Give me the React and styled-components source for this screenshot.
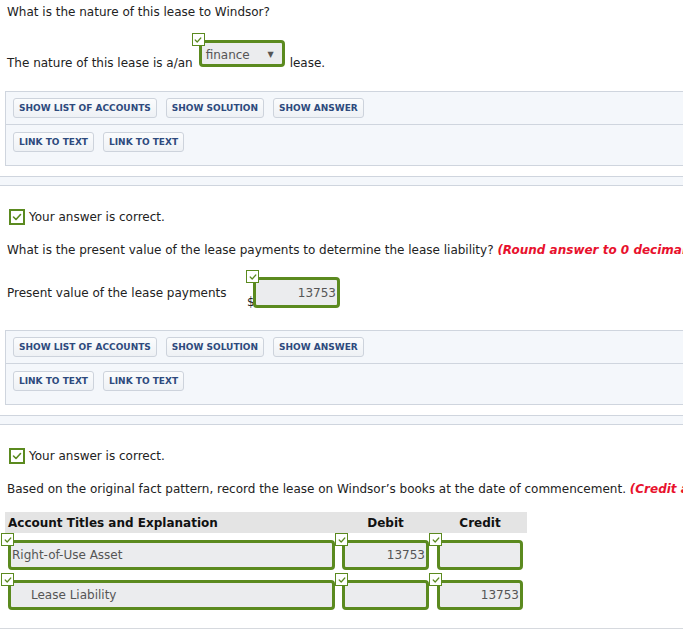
import React from 'react';
import styled, { createGlobalStyle } from 'styled-components';

const GREEN = '#5b8a1f';
const LINE = '#cfd5de';
const PANEL_BG = '#f4f7fb';

const Global = createGlobalStyle`
  html, body { margin: 0; padding: 0; background: #fff; overflow: hidden; }
  body {
    font-family: "DejaVu Sans", Verdana, sans-serif;
    font-size: 12px;
    color: #222;
  }
`;

const Page = styled.div`
  width: 683px;
  overflow: hidden;
  padding-top: 4px;
`;

const Line = styled.div`
  padding-left: 7px;
  line-height: 16px;
  white-space: nowrap;
  margin-top: ${p => p.$mt || 0}px;
`;

const Hint = styled.span`
  color: #e8112d;
  font-weight: bold;
  font-style: italic;
`;

const FillRow = styled.div`
  display: flex;
  align-items: flex-end;
  padding-left: 7px;
  margin-top: 20px;
  white-space: nowrap;
`;

const FillText = styled.span`
  line-height: 16px;
`;

const Marked = styled.span`
  position: relative;
  display: inline-flex;
  margin: ${p => p.$m || '0'};
`;

const MarkBox = styled.span`
  position: absolute;
  top: -7px;
  left: -7px;
  width: 13px;
  height: 13px;
  box-sizing: border-box;
  border: 1px solid ${GREEN};
  background: #fff;
  display: flex;
  align-items: center;
  justify-content: center;
  z-index: 2;
`;

const Check = ({ size = 9, stroke = 1.6 }) => (
  <svg width={size} height={size} viewBox="0 0 10 10">
    <polyline points="1.5,5 4,7.5 8.5,2.5" fill="none" stroke={GREEN} strokeWidth={stroke} strokeLinecap="round" strokeLinejoin="round" />
  </svg>
);

const Mark = () => (
  <MarkBox><Check size={8} stroke={1.5} /></MarkBox>
);

const Select = styled.div`
  width: 86px;
  height: 27px;
  box-sizing: border-box;
  border: 3px solid ${GREEN};
  border-radius: 4px;
  background: #ebecee;
  display: flex;
  align-items: center;
  justify-content: space-between;
  padding: 2px 8px 0 4px;
  color: #555;
  font-size: 12px;
`;

const Arrow = styled.span`
  font-size: 8px;
  color: #555;
`;

const Panel = styled.div`
  margin-left: 5px;
  width: 900px;
  border: 1px solid ${LINE};
  background: ${PANEL_BG};
  margin-top: ${p => p.$mt || 0}px;
`;

const PanelRow = styled.div`
  display: flex;
  gap: 9px;
  padding: ${p => (p.$last ? '7px 7px 13px' : '6px 7px')};
  & + & { border-top: 1px solid ${LINE}; }
`;

const Btn = styled.button`
  font-family: "DejaVu Sans", Verdana, sans-serif;
  font-size: 9px;
  font-weight: bold;
  color: #2e4a7d;
  background: linear-gradient(#fbfcfd, #eef1f5);
  border: 1px solid #cdd3dc;
  border-radius: 3px;
  height: 20px;
  padding: 0 5px;
  line-height: 18px;
  white-space: nowrap;
  cursor: pointer;
`;

const Separator = styled.div`
  margin-top: 10px;
  height: 8px;
  border-top: 1px solid ${LINE};
  border-bottom: 1px solid ${LINE};
  background: ${PANEL_BG};
`;

const CorrectRow = styled.div`
  display: flex;
  align-items: center;
  gap: 4px;
  padding-left: 9px;
  margin-top: 23px;
  line-height: 16px;
`;

const CorrectBox = styled.span`
  width: 16px;
  height: 16px;
  box-sizing: border-box;
  border: 2px solid ${GREEN};
  display: flex;
  align-items: center;
  justify-content: center;
  background: #fff;
`;

const PVRow = styled.div`
  display: flex;
  align-items: center;
  padding-left: 7px;
  margin-top: 19px;
`;

const PVLabel = styled.span`
  width: 240px;
  white-space: nowrap;
`;

const PVGroup = styled.div`
  display: flex;
  align-items: flex-end;
`;

const Dollar = styled.span`
  line-height: 12px;
  width: 6px;
  color: #222;
`;

const Field = styled.div`
  width: ${p => p.$w}px;
  height: ${p => p.$h || 30}px;
  box-sizing: border-box;
  border: 3px solid ${GREEN};
  border-radius: 4px;
  background: #ebecee;
  color: #555;
  font-size: 12px;
  display: flex;
  align-items: center;
  justify-content: ${p => (p.$right ? 'flex-end' : 'flex-start')};
  padding: ${p => (p.$right ? '0 1px 0 0' : `0 0 0 ${p.$indent ? 20 : 1}px`)};
  white-space: nowrap;
`;

const Table = styled.div`
  margin-top: 15px;
  margin-left: 1px;
`;

const HeadRow = styled.div`
  margin-left: 4px;
  width: 522px;
  height: 21px;
  background: #e4e4e4;
  display: flex;
  align-items: center;
  font-weight: bold;
  color: #111;
`;

const HeadCell = styled.div`
  width: ${p => p.$w}px;
  padding-left: ${p => p.$pl || 0}px;
  box-sizing: border-box;
  text-align: ${p => p.$align || 'center'};
  margin-right: ${p => p.$mr || 0}px;
`;

const EntryRow = styled.div`
  display: flex;
  margin-top: ${p => p.$mt || 0}px;
`;

const Cell = styled.div`
  position: relative;
  padding: 7px 0 0 ${p => p.$pl || 7}px;
`;

const CellMark = styled(MarkBox)`
  top: 0;
  left: 0;
`;

const BottomLine = styled.div`
  margin-top: 18px;
  border-top: 1px solid #d6d9de;
`;

const Buttons = () => (
  <>
    <PanelRow>
      <Btn>SHOW LIST OF ACCOUNTS</Btn>
      <Btn>SHOW SOLUTION</Btn>
      <Btn>SHOW ANSWER</Btn>
    </PanelRow>
    <PanelRow $last>
      <Btn>LINK TO TEXT</Btn>
      <Btn>LINK TO TEXT</Btn>
    </PanelRow>
  </>
);

const Correct = () => (
  <CorrectRow>
    <CorrectBox><Check size={10} stroke={1.6} /></CorrectBox>
    <span>Your answer is correct.</span>
  </CorrectRow>
);

const Entry = ({ mt, account, indent, debit, credit }) => (
  <EntryRow $mt={mt}>
    <Cell>
      <CellMark><Check size={8} stroke={1.5} /></CellMark>
      <Field $w={327} $indent={indent}>{account}</Field>
    </Cell>
    <Cell>
      <CellMark><Check size={8} stroke={1.5} /></CellMark>
      <Field $w={87} $right>{debit}</Field>
    </Cell>
    <Cell $pl={8}>
      <CellMark><Check size={8} stroke={1.5} /></CellMark>
      <Field $w={86} $right>{credit}</Field>
    </Cell>
  </EntryRow>
);

export default function App() {
  return (
    <Page>
      <Global />
      <Line>What is the nature of this lease to Windsor?</Line>
      <FillRow>
        <FillText>The nature of this lease is a/an</FillText>
        <Marked $m="0 5px 4px 6px">
          <Mark />
          <Select>
            <span>finance</span>
            <Arrow>▼</Arrow>
          </Select>
        </Marked>
        <FillText>lease.</FillText>
      </FillRow>
      <Panel $mt={20}>
        <Buttons />
      </Panel>
      <Separator />

      <Correct />
      <Line $mt={17}>
        What is the present value of the lease payments to determine the lease liability?{' '}
        <Hint>(Round answer to 0 decimal places, e.g. 5,275.)</Hint>
      </Line>
      <PVRow>
        <PVLabel>Present value of the lease payments</PVLabel>
        <PVGroup>
          <Dollar>$</Dollar>
          <Marked>
            <Mark />
            <Field $w={87} $h={31} $right>13753</Field>
          </Marked>
        </PVGroup>
      </PVRow>
      <Panel $mt={22}>
        <Buttons />
      </Panel>
      <Separator />

      <Correct />
      <Line $mt={17}>
        Based on the original fact pattern, record the lease on Windsor’s books at the date of commencement.{' '}
        <Hint>(Credit account titles are automatically indented when amount is entered. Do not indent manually.)</Hint>
      </Line>
      <Table>
        <HeadRow>
          <HeadCell $w={337} $pl={3} $align="left">Account Titles and Explanation</HeadCell>
          <HeadCell $w={87} $mr={8}>Debit</HeadCell>
          <HeadCell $w={86}>Credit</HeadCell>
        </HeadRow>
        <Entry account="Right-of-Use Asset" debit="13753" credit="" />
        <Entry mt={3} account="Lease Liability" indent debit="" credit="13753" />
      </Table>
      <BottomLine />
    </Page>
  );
}
